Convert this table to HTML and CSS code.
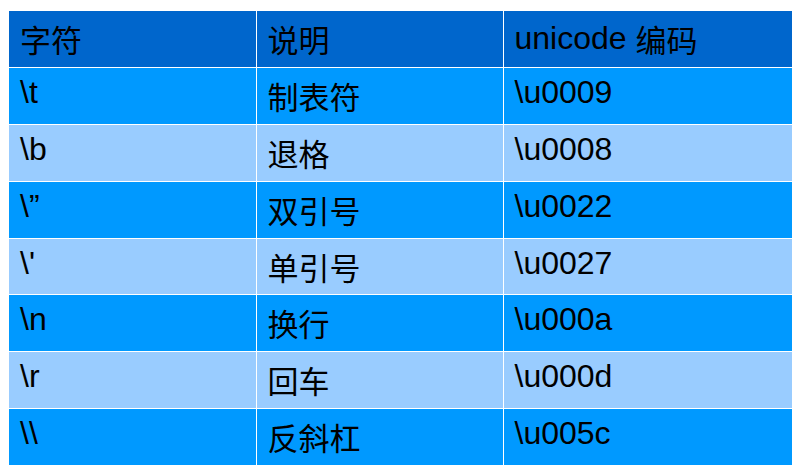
FILE: index.html
```html
<!DOCTYPE html>
<html lang="zh">
<head>
<meta charset="utf-8">
<link rel="stylesheet" href="styles.css">
</head>
<body>
<table class="esc">
  <colgroup>
    <col class="c1"><col class="c2"><col class="c3">
  </colgroup>
  <thead>
    <tr class="head">
      <th><span class="zh">字符</span></th>
      <th><span class="zh">说明</span></th>
      <th>unicode <span class="zh">编码</span></th>
    </tr>
  </thead>
  <tbody>
    <tr class="odd"><td>\t</td><td class="zhcell">制表符</td><td>\u0009</td></tr>
    <tr class="even"><td>\b</td><td class="zhcell">退格</td><td>\u0008</td></tr>
    <tr class="odd"><td>\”</td><td class="zhcell">双引号</td><td>\u0022</td></tr>
    <tr class="even"><td>\'</td><td class="zhcell">单引号</td><td>\u0027</td></tr>
    <tr class="odd"><td>\n</td><td class="zhcell">换行</td><td>\u000a</td></tr>
    <tr class="even"><td>\r</td><td class="zhcell">回车</td><td>\u000d</td></tr>
    <tr class="odd"><td>\\</td><td class="zhcell">反斜杠</td><td>\u005c</td></tr>
  </tbody>
</table>
</body>
</html>
```
FILE: styles.css
```css
html, body {
  margin: 0;
  padding: 0;
  background: #ffffff;
}
body {
  padding: 11px 0 0 9px;
  font-family: "Liberation Sans", "Noto Sans CJK SC", sans-serif;
  color: #000;
}
.esc {
  border-collapse: collapse;
  table-layout: fixed;
  width: 783px;
}
.c1 { width: 247px; }
.c2 { width: 247px; }
.c3 { width: 289px; }
.esc th, .esc td {
  border: 1px solid #ffffff;
  height: 56.75px;
  box-sizing: border-box;
  padding: 7px 0 0 11px;
  vertical-align: top;
  text-align: left;
  font-weight: normal;
  font-size: 32px;
  line-height: 34px;
}
.esc th { padding-top: 10px; }
.esc tr:first-child th { border-top: none; }
.esc th:first-child, .esc td:first-child { border-left: none; }
.esc th:last-child, .esc td:last-child { border-right: none; }
.esc tbody tr:last-child td { border-bottom: none; }
.head { background: #0066cc; }
.odd { background: #0099ff; }
.even { background: #99ccff; }
.zh {
  font-family: "Noto Sans CJK SC", sans-serif;
  font-size: 31px;
  vertical-align: -3px;
}
.esc td.zhcell {
  font-family: "Noto Sans CJK SC", sans-serif;
  font-size: 31px;
  padding-top: 11px;
}
```
